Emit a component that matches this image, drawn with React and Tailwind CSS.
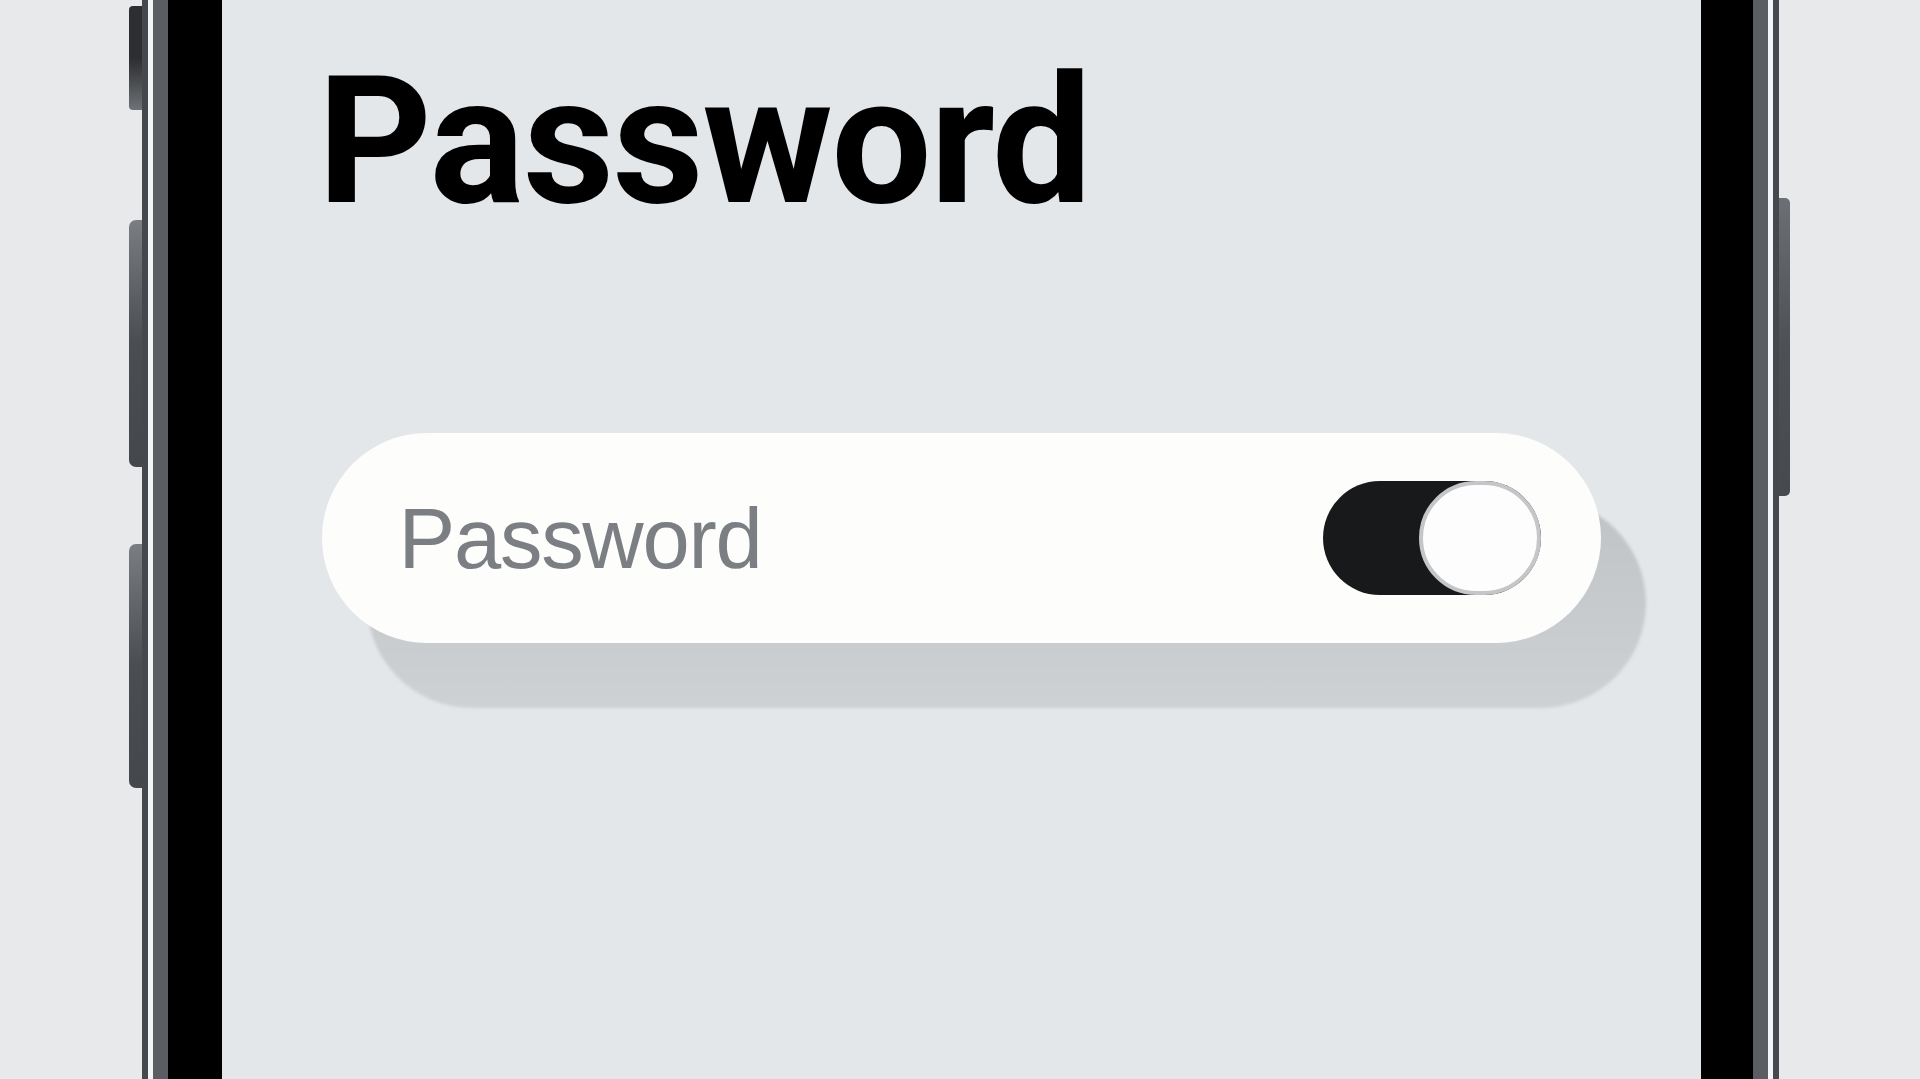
export default function App() {
  return (
    <div className="w-full h-[1079px] overflow-hidden bg-[#e8e9eb] flex justify-center font-['Liberation_Sans',Arial,sans-serif]">
      <div className="relative w-[1637px] h-full flex">
        {/* side buttons */}
        <div className="absolute left-[-13px] top-[6px] w-[16px] h-[104px] rounded-l-[4px] bg-linear-to-b from-[#2c2e31] via-[#2c2e31] to-[#6f7276]" />
        <div className="absolute left-[-13px] top-[220px] w-[16px] h-[247px] rounded-l-[7px] bg-linear-to-b from-[#7a7d81] via-[#4a4d51] to-[#44474b]" />
        <div className="absolute left-[-13px] top-[544px] w-[16px] h-[244px] rounded-l-[7px] bg-linear-to-b from-[#7a7d81] via-[#4a4d51] to-[#44474b]" />
        <div className="absolute right-[-11px] top-[198px] w-[14px] h-[298px] rounded-r-[5px] bg-linear-to-b from-[#6c6f73] via-[#4d5054] to-[#46494d]" />

        {/* frame */}
        <div className="relative flex-1 flex border-x-[6px] border-[#45484c]">
          <div className="flex-1 flex border-x-[5px] border-[#f3f4f5]">
            <div className="flex-1 flex border-x-[15px] border-[#5a5e63]">
              <div className="flex-1 flex border-l-[54px] border-r-[52px] border-black">
                <div className="flex-1 bg-[#e4e7ea] px-[100px] pt-[52px]">
                  <h1 className="font-['Roboto',Arial,sans-serif] text-[178px] leading-none font-bold tracking-[-0.01em] text-black -ml-[4px]">
                    Password
                  </h1>
                  <div className="relative mt-[203px] h-[210px]">
                    <div className="absolute inset-0 translate-x-[45px] translate-y-[65px] rounded-full bg-linear-to-b from-[#c0c3c6] to-[#ced1d4] blur-[1.5px]" />
                    <div className="relative h-full rounded-full bg-[#fdfdfc] flex items-center justify-between pl-[77px] pr-[60px]">
                      <span className="text-[85px] leading-none text-[#7b7f84] tracking-[-0.015em]">
                        Password
                      </span>
                      <div className="relative w-[218px] h-[114px] rounded-full bg-[#18191b]">
                        <div className="absolute right-0 top-0 w-[122px] h-[114px] rounded-full bg-[#fdfdfd] border-[4px] border-[#c4c6c9]" />
                      </div>
                    </div>
                  </div>
                </div>
              </div>
            </div>
          </div>
        </div>
      </div>
    </div>
  );
}
